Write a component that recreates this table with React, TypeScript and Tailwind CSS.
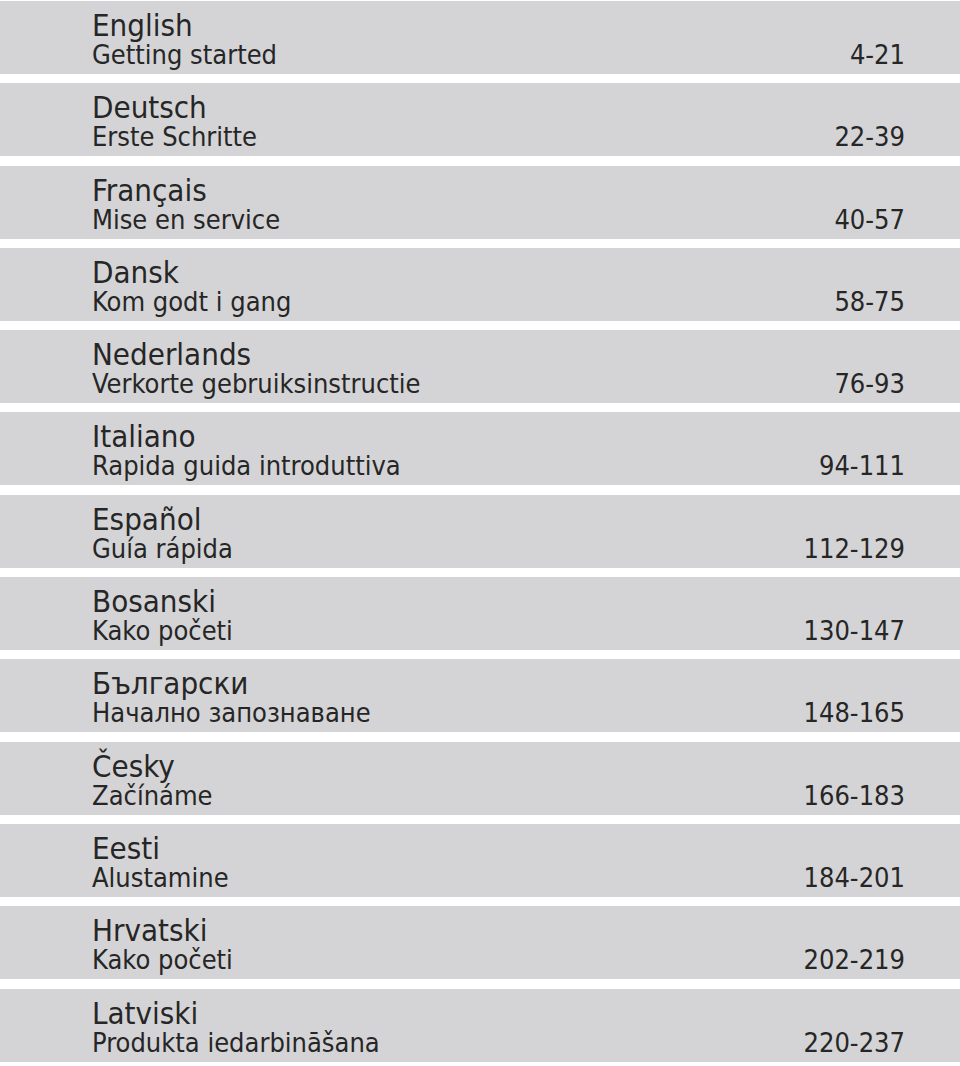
const sections = [
  { lang: 'English', title: 'Getting started', pages: '4-21' },
  { lang: 'Deutsch', title: 'Erste Schritte', pages: '22-39' },
  { lang: 'Français', title: 'Mise en service', pages: '40-57' },
  { lang: 'Dansk', title: 'Kom godt i gang', pages: '58-75' },
  { lang: 'Nederlands', title: 'Verkorte gebruiksinstructie', pages: '76-93' },
  { lang: 'Italiano', title: 'Rapida guida introduttiva', pages: '94-111' },
  { lang: 'Español', title: 'Guía rápida', pages: '112-129' },
  { lang: 'Bosanski', title: 'Kako početi', pages: '130-147' },
  { lang: 'Български', title: 'Начално запознаване', pages: '148-165' },
  { lang: 'Česky', title: 'Začínáme', pages: '166-183' },
  { lang: 'Eesti', title: 'Alustamine', pages: '184-201' },
  { lang: 'Hrvatski', title: 'Kako početi', pages: '202-219' },
  { lang: 'Latviski', title: 'Produkta iedarbināšana', pages: '220-237' },
]

export default function App() {
  return (
    <div
      className="w-[960px] h-[1066px] bg-white pt-[1px] flex flex-col gap-[9.3px] text-[#262626] font-stretch-condensed overflow-hidden"
      style={{ fontFamily: '"DejaVu Sans Condensed", "DejaVu Sans", sans-serif' }}
    >
      {sections.map((s) => (
        <div key={s.lang} className="h-[73px] shrink-0 bg-[#d4d4d6] pl-[92px] pr-[55px] pt-[9px]">
          <div className="text-[31px] leading-[30px]">{s.lang}</div>
          <div className="mt-[1px] flex justify-between text-[27px] leading-[28px]">
            <span>{s.title}</span>
            <span>{s.pages}</span>
          </div>
        </div>
      ))}
    </div>
  )
}
